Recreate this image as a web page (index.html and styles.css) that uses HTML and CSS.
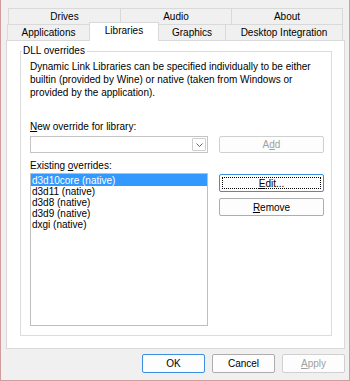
FILE: index.html
```html
<!DOCTYPE html>
<html lang="en">
<head>
    <meta charset="UTF-8">
    <title>Wine configuration</title>
    <link rel="stylesheet" href="styles.css">
</head>
<body>
    <div class="tabs">
        <div class="tab-row back">
            <div class="tab w-drives">Drives</div>
            <div class="tab w-audio">Audio</div>
            <div class="tab w-about">About</div>
        </div>
        <div class="tab-row front">
            <div class="tab w-apps">Applications</div>
            <div class="tab w-libs active">Libraries</div>
            <div class="tab w-gfx">Graphics</div>
            <div class="tab w-desk">Desktop Integration</div>
        </div>
    </div>

    <div class="panel">
        <fieldset class="group">
            <legend>DLL overrides</legend>
            <p class="desc">Dynamic Link Libraries can be specified individually to be either builtin (provided by Wine) or native (taken from Windows or provided by the application).</p>

            <label class="field-label new-label"><u>N</u>ew override for library:</label>
            <div class="row">
                <div class="combo">
                    <span class="combo-btn">
                        <svg viewBox="0 0 7 4" width="7" height="4">
                            <polyline points="0.5,0.5 3.5,3.5 6.5,0.5" fill="none" stroke="#606060" stroke-width="1"/>
                        </svg>
                    </span>
                </div>
                <button class="btn side-btn" disabled>A<u>d</u>d</button>
            </div>

            <label class="field-label existing-label">Existing <u>o</u>verrides:</label>
            <div class="row list-row">
                <ul class="list">
                    <li class="selected">d3d10core (native)</li>
                    <li>d3d11 (native)</li>
                    <li>d3d8 (native)</li>
                    <li>d3d9 (native)</li>
                    <li>dxgi (native)</li>
                </ul>
                <div class="side">
                    <button class="btn side-btn focused"><span class="focus-rect"><u>E</u>dit...</span></button>
                    <button class="btn side-btn"><u>R</u>emove</button>
                </div>
            </div>
        </fieldset>
    </div>

    <div class="footer">
        <button class="btn dlg-btn default">OK</button>
        <button class="btn dlg-btn">Cancel</button>
        <button class="btn dlg-btn" disabled><u>A</u>pply</button>
    </div>
</body>
</html>
```

FILE: styles.css
```css
:root {
    --window-bg: #f0f0f0;
    --frame: #d29c9c;
    --line: #d9d9d9;
    --group-line: #dcdcdc;
    --btn-border: #adadad;
    --accent: #3399ff;
    --focus-border: #3c8fe0;
    --disabled: #a0a0a0;
}

* {
    box-sizing: border-box;
}

body {
    margin: 0;
    width: 350px;
    height: 381px;
    overflow: hidden;
    background-color: var(--window-bg);
    border: 1px solid var(--frame);
    border-top: none;
    font-family: "Liberation Sans", Arial, sans-serif;
    font-size: 10px;
    color: #000;
    display: flex;
    flex-direction: column;
}

u {
    text-decoration: underline;
    text-underline-offset: 1px;
}

/* Tabs */
.tabs {
    padding-top: 8px;
}

.tab-row {
    display: flex;
    align-items: flex-start;
    height: 16px;
}

.tab-row.back {
    margin-left: 7px;
}

.tab-row.front {
    margin-left: 6px;
}

.tab {
    height: 16px;
    border: 1px solid var(--line);
    border-bottom: none;
    background-color: var(--window-bg);
    display: flex;
    align-items: center;
    justify-content: center;
    white-space: nowrap;
    margin-left: -1px;
}

.tab:first-child {
    margin-left: 0;
}

.tab.active {
    margin-top: -2px;
    height: 19px;
    padding-bottom: 3px;
    background-color: #fff;
    position: relative;
    z-index: 1;
}

.w-drives { width: 113px; }
.w-audio { width: 112px; }
.w-about { width: 112px; }
.w-apps { width: 83px; }
.w-libs { width: 70px; }
.w-gfx { width: 68px; }
.w-desk { width: 118px; }

/* Page */
.panel {
    margin-left: 5px;
    width: 339px;
    height: 309px;
    background-color: #fff;
    border: 1px solid var(--line);
    padding: 0 12px 0 13px;
}

.group {
    margin: 4px 0 0;
    padding: 0 6px 9px 9px;
    border: 1px solid var(--group-line);
    min-width: 0;
}

.group legend {
    margin-left: -8px;
    padding: 0 2px 0 1px;
    line-height: 12px;
}

.desc {
    margin: 3px 0 0;
    line-height: 13px;
}

.field-label {
    display: block;
    line-height: 13px;
}

.new-label {
    margin-top: 21px;
}

.existing-label {
    margin-top: 6px;
}

.row {
    display: flex;
    gap: 11px;
    margin-top: 3px;
}

.list-row {
    margin-top: 1px;
}

.combo {
    width: 178px;
    height: 17px;
    border: 1px solid #c4c4c4;
    background-color: #fff;
    display: flex;
    justify-content: flex-end;
    align-items: center;
    padding-right: 1px;
}

.combo-btn {
    width: 14px;
    height: 13px;
    border: 1px solid #cfcfcf;
    border-radius: 1px;
    display: flex;
    align-items: center;
    justify-content: center;
}

.list {
    list-style: none;
    margin: 0;
    padding: 0;
    width: 178px;
    height: 153px;
    border: 1px solid #bfbfbf;
    background-color: #fff;
}

.list li {
    height: 11px;
    line-height: 11px;
    padding-left: 1px;
}

.list li.selected {
    height: 12px;
    line-height: 13px;
    background-color: var(--accent);
    color: #fff;
}

.side {
    display: flex;
    flex-direction: column;
    gap: 6px;
    padding-top: 1px;
}

/* Buttons */
.btn {
    font: inherit;
    color: #000;
    background-color: #fdfdfd;
    border: 1px solid var(--btn-border);
    border-radius: 2px;
    padding: 0;
    display: flex;
    align-items: center;
    justify-content: center;
}

.btn:disabled {
    color: var(--disabled);
    border-color: #d0d0d0;
}

.side-btn {
    width: 105px;
    height: 18px;
}

.row > .side-btn {
    height: 17px;
}

.btn.focused,
.btn.default {
    border-color: var(--focus-border);
}

.focus-rect {
    flex: 1;
    align-self: stretch;
    margin: 2px;
    border: 1px dotted #000;
    display: flex;
    align-items: center;
    justify-content: center;
}

.footer {
    display: flex;
    justify-content: flex-end;
    gap: 7px;
    margin-top: 5px;
    padding-right: 4px;
}

.dlg-btn {
    width: 63px;
    height: 19px;
}
```
